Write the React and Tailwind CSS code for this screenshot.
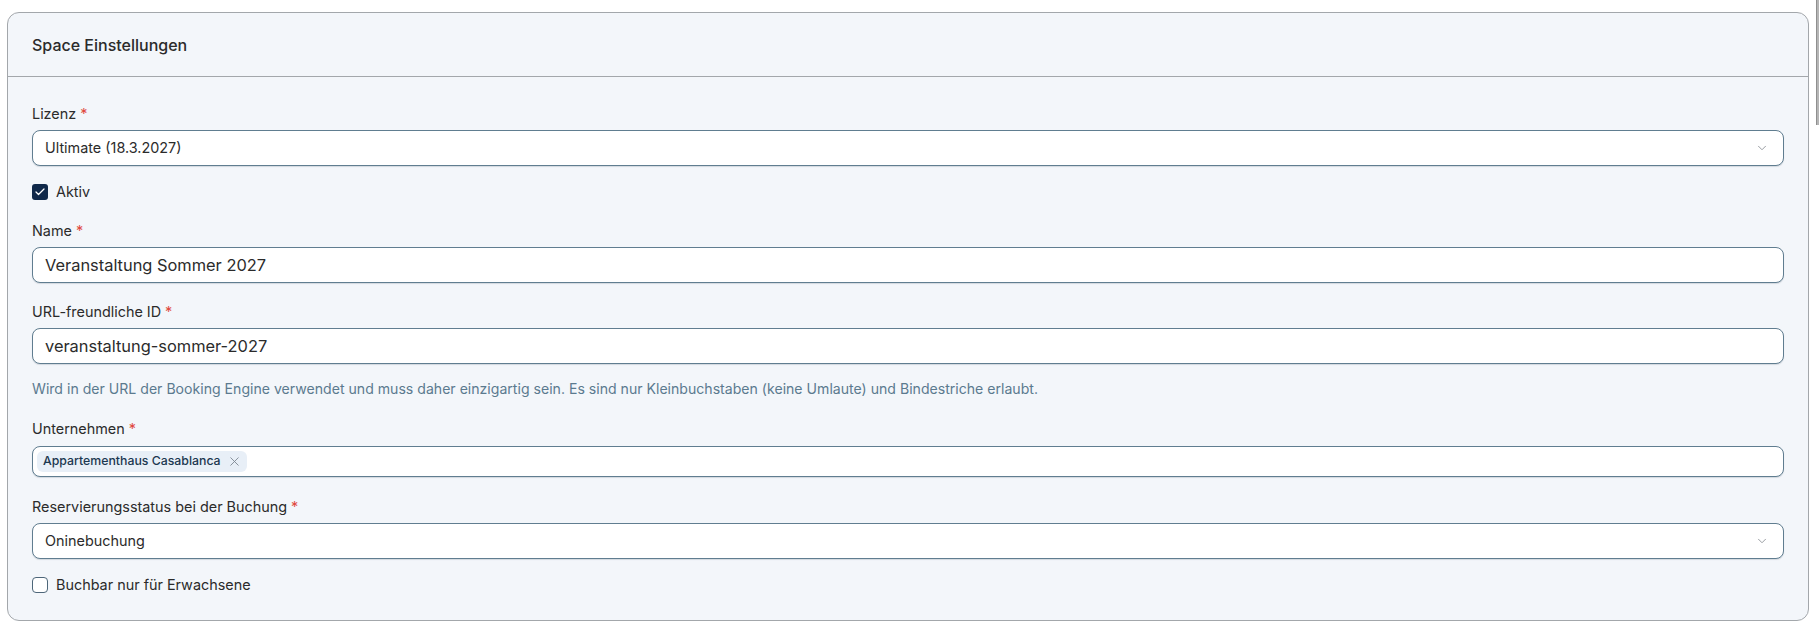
import { Check, ChevronDown, X } from "lucide-react";

function Label({ children, required }) {
  return (
    <label className="block text-[14.4px] leading-5 text-[#2b2b2b]">
      {children}
      {required && <span className="ml-1 text-[#e0483e]">*</span>}
    </label>
  );
}

function SelectBox({ value }) {
  return (
    <div className="mt-[6px] flex h-9 items-center justify-between rounded-lg border border-[#607d90] bg-white pl-[12px] pr-[14px] shadow-[0_1px_1px_rgba(30,50,70,0.15)]">
      <span className="text-[14.4px] text-[#2b2b2b]">{value}</span>
      <ChevronDown size={14} strokeWidth={1.5} className="text-[#8a8f95]" />
    </div>
  );
}

function TextInput({ value }) {
  return (
    <div className="mt-[6px] flex h-9 items-center rounded-lg border border-[#607d90] bg-white px-[12px] shadow-[0_1px_1px_rgba(30,50,70,0.15)]">
      <span className="text-[16.4px] text-[#2b2b2b]">{value}</span>
    </div>
  );
}

function CheckRow({ checked, children }) {
  return (
    <div className="flex h-5 items-center gap-2">
      {checked ? (
        <span className="flex h-4 w-4 items-center justify-center rounded-[3px] bg-[#10294a]">
          <Check size={12} strokeWidth={2.5} className="text-white" />
        </span>
      ) : (
        <span className="h-4 w-4 rounded-[4px] border border-[#4d6679] bg-white" />
      )}
      <span className="text-[14.4px] text-[#2b2b2b]">{children}</span>
    </div>
  );
}

export default function App() {
  return (
    <div className="min-h-[628px] bg-white pl-[7px] pr-[10px] pt-[12px] font-['Inter',sans-serif]">
      <div className="rounded-xl border border-[#a3a7ab] bg-[#f3f6fa]">
        {/* Header */}
        <div className="flex h-[64px] items-center border-b border-[#a3a7ab] px-6">
          <h2 className="text-[16px] font-medium text-[#2b2b2b]">Space Einstellungen</h2>
        </div>

        {/* Form */}
        <div className="px-6 pb-[25px] pt-[27px]">
          <Label required>Lizenz</Label>
          <SelectBox value="Ultimate (18.3.2027)" />

          <div className="mt-[16px]">
            <CheckRow checked>Aktiv</CheckRow>
          </div>

          <div className="mt-[19px]">
            <Label required>Name</Label>
            <TextInput value="Veranstaltung Sommer 2027" />
          </div>

          <div className="mt-[19px]">
            <Label required>URL-freundliche ID</Label>
            <TextInput value="veranstaltung-sommer-2027" />
          </div>

          <p className="mt-[15px] text-[14.1px] leading-5 text-[#5b7a8f]">
            Wird in der URL der Booking Engine verwendet und muss daher einzigartig sein. Es sind nur
            Kleinbuchstaben (keine Umlaute) und Bindestriche erlaubt.
          </p>

          <div className="mt-[20px]">
            <Label required>Unternehmen</Label>
            <div className="mt-[7px] flex h-[31px] items-center rounded-lg border border-[#607d90] bg-white px-[4px] shadow-[0_1px_1px_rgba(30,50,70,0.15)]">
              <span className="flex h-[21px] items-center gap-[6px] rounded-md bg-[#e8eff7] pl-[6px] pr-[5px] text-[12.3px] font-medium text-[#1c3850]">
                Appartementhaus Casablanca
                <X size={15} strokeWidth={1.4} className="text-[#7b858f]" />
              </span>
            </div>
          </div>

          <div className="mt-[20px]">
            <Label required>Reservierungsstatus bei der Buchung</Label>
            <SelectBox value="Oninebuchung" />
          </div>

          <div className="mt-[16px]">
            <CheckRow>Buchbar nur für Erwachsene</CheckRow>
          </div>
        </div>
      </div>

      {/* page scrollbar thumb */}
      <div className="fixed right-0 top-0 h-[125px] w-[3px] border-l border-[#8f8f8f] bg-[#b5b5b5]" />
    </div>
  );
}
